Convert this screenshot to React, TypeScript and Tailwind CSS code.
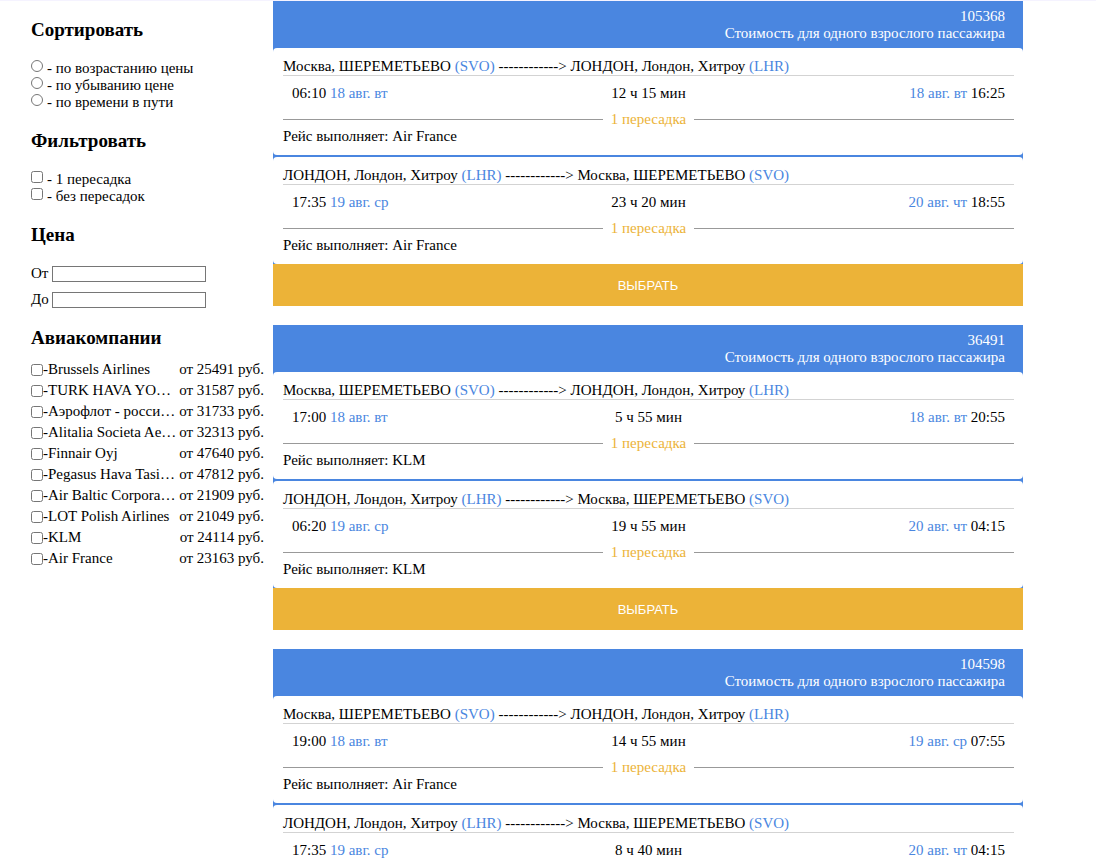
import { useState } from 'react';

type Leg = {
  from: string;
  fromCode: string;
  to: string;
  toCode: string;
  departTime: string;
  departDate: string;
  duration: string;
  arriveDate: string;
  arriveTime: string;
  carrier: string;
};

type Flight = { price: number; legs: Leg[] };

const MOSCOW = 'Москва, ШЕРЕМЕТЬЕВО';
const LONDON = 'ЛОНДОН, Лондон, Хитроу';

function outbound(departTime: string, duration: string, arriveDate: string, arriveTime: string, carrier: string): Leg {
  return { from: MOSCOW, fromCode: 'SVO', to: LONDON, toCode: 'LHR', departTime, departDate: '18 авг. вт', duration, arriveDate, arriveTime, carrier };
}

function inbound(departTime: string, duration: string, arriveDate: string, arriveTime: string, carrier: string): Leg {
  return { from: LONDON, fromCode: 'LHR', to: MOSCOW, toCode: 'SVO', departTime, departDate: '19 авг. ср', duration, arriveDate, arriveTime, carrier };
}

const flights: Flight[] = [
  {
    price: 105368,
    legs: [
      outbound('06:10', '12 ч 15 мин', '18 авг. вт', '16:25', 'Air France'),
      inbound('17:35', '23 ч 20 мин', '20 авг. чт', '18:55', 'Air France'),
    ],
  },
  {
    price: 36491,
    legs: [
      outbound('17:00', '5 ч 55 мин', '18 авг. вт', '20:55', 'KLM'),
      inbound('06:20', '19 ч 55 мин', '20 авг. чт', '04:15', 'KLM'),
    ],
  },
  {
    price: 104598,
    legs: [
      outbound('19:00', '14 ч 55 мин', '19 авг. ср', '07:55', 'Air France'),
      inbound('17:35', '8 ч 40 мин', '20 авг. чт', '04:15', 'Air France'),
    ],
  },
];

const airlines = [
  { name: 'Brussels Airlines', price: 25491 },
  { name: 'TURK HAVA YO…', price: 31587 },
  { name: 'Аэрофлот - росси…', price: 31733 },
  { name: 'Alitalia Societa Ae…', price: 32313 },
  { name: 'Finnair Oyj', price: 47640 },
  { name: 'Pegasus Hava Tasi…', price: 47812 },
  { name: 'Air Baltic Corpora…', price: 21909 },
  { name: 'LOT Polish Airlines', price: 21049 },
  { name: 'KLM', price: 24114 },
  { name: 'Air France', price: 23163 },
];

const sortOptions = ['по возрастанию цены', 'по убыванию цене', 'по времени в пути'];
const stopOptions = ['1 пересадка', 'без пересадок'];

function Heading({ children }: { children: string }) {
  return <h3 className="text-[19px] leading-5 font-bold">{children}</h3>;
}

function LegView({ leg }: { leg: Leg }) {
  return (
    <section className="rounded bg-white p-2.5 pr-[9px]">
      <div className="border-b border-[#d3d3d3]">
        {leg.from} <span className="text-[#4a86e0]">({leg.fromCode})</span> {'------------>'} {leg.to}{' '}
        <span className="text-[#4a86e0]">({leg.toCode})</span>
      </div>
      <div className="grid grid-cols-3 px-[9px] py-[9px]">
        <div>
          {leg.departTime} <span className="text-[#4a86e0]">{leg.departDate}</span>
        </div>
        <div className="text-center">{leg.duration}</div>
        <div className="text-right">
          <span className="text-[#4a86e0]">{leg.arriveDate}</span> {leg.arriveTime}
        </div>
      </div>
      <div className="flex items-center gap-2 text-[#ecb338]">
        <span className="h-px flex-1 bg-[#999999]" />
        1 пересадка
        <span className="h-px flex-1 bg-[#999999]" />
      </div>
      <div>Рейс выполняет: {leg.carrier}</div>
    </section>
  );
}

function FlightCard({ flight }: { flight: Flight }) {
  return (
    <article className="bg-[#4a86e0]">
      <header className="px-[18px] pt-[7px] pb-1.5 text-right text-white">
        <div>{flight.price}</div>
        <div>Стоимость для одного взрослого пассажира</div>
      </header>
      <div className="flex flex-col gap-0.5">
        {flight.legs.map((leg) => (
          <LegView key={leg.fromCode} leg={leg} />
        ))}
      </div>
      <button
        type="button"
        className="block h-[42px] w-full bg-[#ecb338] font-['Liberation_Sans',Arial,sans-serif] text-[13px] text-white"
      >
        ВЫБРАТЬ
      </button>
    </article>
  );
}

export default function App() {
  const [sort, setSort] = useState('');

  return (
    <div className="border-t border-[#f5f3ff] bg-white font-['Liberation_Serif','Times_New_Roman',serif] text-[15px] leading-[17px] text-black">
      <div className="flex gap-[9px] pr-5 pl-[31px]">
        <aside className="flex w-[233px] shrink-0 flex-col gap-5 pt-[19px]">
          <Heading>Сортировать</Heading>
          <div>
            {sortOptions.map((option) => (
              <label key={option} className="flex items-start gap-1">
                <input
                  type="radio"
                  name="sort"
                  checked={sort === option}
                  onChange={() => setSort(option)}
                  className="size-3"
                />
                <span>- {option}</span>
              </label>
            ))}
          </div>
          <Heading>Фильтровать</Heading>
          <div>
            {stopOptions.map((option) => (
              <label key={option} className="flex items-start gap-1">
                <input type="checkbox" className="size-3" />
                <span>- {option}</span>
              </label>
            ))}
          </div>
          <Heading>Цена</Heading>
          <div className="flex flex-col gap-[9px]">
            <div className="flex items-center gap-1">
              <label htmlFor="price-from" className="w-[17px]">От</label>
              <input id="price-from" type="text" className="h-4 w-[154px] border border-[#767676] px-0.5 text-xs" />
            </div>
            <div className="flex items-center gap-1">
              <label htmlFor="price-to" className="w-[17px]">До</label>
              <input id="price-to" type="text" className="h-4 w-[154px] border border-[#767676] px-0.5 text-xs" />
            </div>
          </div>
          <div className="flex flex-col gap-[13px]">
            <Heading>Авиакомпании</Heading>
            <div className="flex flex-col gap-1">
              {airlines.map((airline) => (
                <label key={airline.name} className="flex items-center">
                  <input type="checkbox" className="size-3 shrink-0" />
                  <span className="flex-1 whitespace-nowrap">-{airline.name}</span>
                  <span className="whitespace-nowrap">от {airline.price} руб.</span>
                </label>
              ))}
            </div>
          </div>
        </aside>
        <main className="flex max-w-[750px] flex-1 flex-col gap-[19px]">
          {flights.map((flight) => (
            <FlightCard key={flight.price} flight={flight} />
          ))}
        </main>
      </div>
    </div>
  );
}
